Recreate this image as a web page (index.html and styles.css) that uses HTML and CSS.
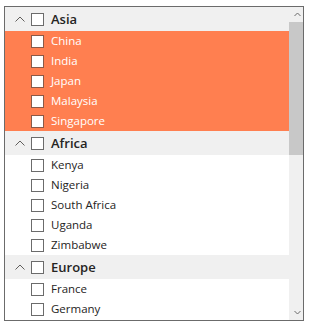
FILE: index.html
```html
<!DOCTYPE html>
<html>
<head>
<meta charset="utf-8">
<link rel="stylesheet" href="styles.css">
</head>
<body>
<div class="slicer">
  <div class="list">
    <div class="group">
      <div class="head">
        <svg class="chev" width="10" height="6" viewBox="0 0 10 6"><path d="M0.5 5.5 L5 1 L9.5 5.5" fill="none" stroke="#605e5c" stroke-width="1"/></svg>
        <span class="box"></span>
        <span class="hlabel">Asia</span>
      </div>
      <div class="item sel"><span class="box"></span><span class="label">China</span></div>
      <div class="item sel"><span class="box"></span><span class="label">India</span></div>
      <div class="item sel"><span class="box"></span><span class="label">Japan</span></div>
      <div class="item sel"><span class="box"></span><span class="label">Malaysia</span></div>
      <div class="item sel"><span class="box"></span><span class="label">Singapore</span></div>
    </div>
    <div class="group">
      <div class="head">
        <svg class="chev" width="10" height="6" viewBox="0 0 10 6"><path d="M0.5 5.5 L5 1 L9.5 5.5" fill="none" stroke="#605e5c" stroke-width="1"/></svg>
        <span class="box"></span>
        <span class="hlabel">Africa</span>
      </div>
      <div class="item"><span class="box"></span><span class="label">Kenya</span></div>
      <div class="item"><span class="box"></span><span class="label">Nigeria</span></div>
      <div class="item"><span class="box"></span><span class="label">South Africa</span></div>
      <div class="item"><span class="box"></span><span class="label">Uganda</span></div>
      <div class="item"><span class="box"></span><span class="label">Zimbabwe</span></div>
    </div>
    <div class="group">
      <div class="head">
        <svg class="chev" width="10" height="6" viewBox="0 0 10 6"><path d="M0.5 5.5 L5 1 L9.5 5.5" fill="none" stroke="#605e5c" stroke-width="1"/></svg>
        <span class="box"></span>
        <span class="hlabel">Europe</span>
      </div>
      <div class="item"><span class="box"></span><span class="label">France</span></div>
      <div class="item"><span class="box"></span><span class="label">Germany</span></div>
    </div>
  </div>
  <div class="scrollbar">
    <div class="arrow">
      <svg width="7" height="5" viewBox="0 0 7 5"><path d="M0.5 4 L3.5 1 L6.5 4" fill="none" stroke="#6a6a6a" stroke-width="1"/></svg>
    </div>
    <div class="track"><div class="thumb"></div></div>
    <div class="arrow">
      <svg width="7" height="5" viewBox="0 0 7 5"><path d="M0.5 1 L3.5 4 L6.5 1" fill="none" stroke="#6a6a6a" stroke-width="1"/></svg>
    </div>
  </div>
</div>
</body>
</html>
```

FILE: styles.css
```css
html, body {
  margin: 0;
  padding: 0;
  background: #ffffff;
}
body {
  padding: 6px 0 0 4px;
  font-family: "Open Sans", "Noto Sans", sans-serif;
  color: #252423;
}
.slicer {
  width: 298px;
  height: 313px;
  border: 1px solid #6b6b6b;
  display: flex;
  overflow: hidden;
}
.list {
  flex: 1;
  overflow: hidden;
}
.head {
  height: 24px;
  background: #f0f0f0;
  display: flex;
  align-items: center;
}
.chev {
  margin-left: 10px;
  margin-right: 6px;
  display: block;
}
.box {
  width: 11px;
  height: 11px;
  border: 1px solid #6b6b6b;
  background: #fff;
  flex: none;
}
.hlabel {
  margin-left: 7px;
  font-size: 13px;
  font-weight: 600;
  line-height: 18px;
  color: #252423;
}
.item {
  height: 20px;
  display: flex;
  align-items: center;
  padding-left: 26px;
}
.label {
  margin-left: 7px;
  font-size: 11.5px;
  line-height: 16px;
  margin-top: -1px;
  color: #252423;
}
.item.sel {
  background: #ff7f50;
}
.item.sel .box {
  border-color: #8a5a48;
}
.item.sel .label {
  color: #ffffff;
}
.scrollbar {
  width: 14px;
  background: #f0f0f0;
  display: flex;
  flex-direction: column;
}
.arrow {
  height: 15px;
  display: flex;
  align-items: center;
  justify-content: center;
}
.arrow svg { display: block; margin-left: 2px; }
.track {
  flex: 1;
}
.thumb {
  height: 133px;
  background: #c8c8c8;
}
```
